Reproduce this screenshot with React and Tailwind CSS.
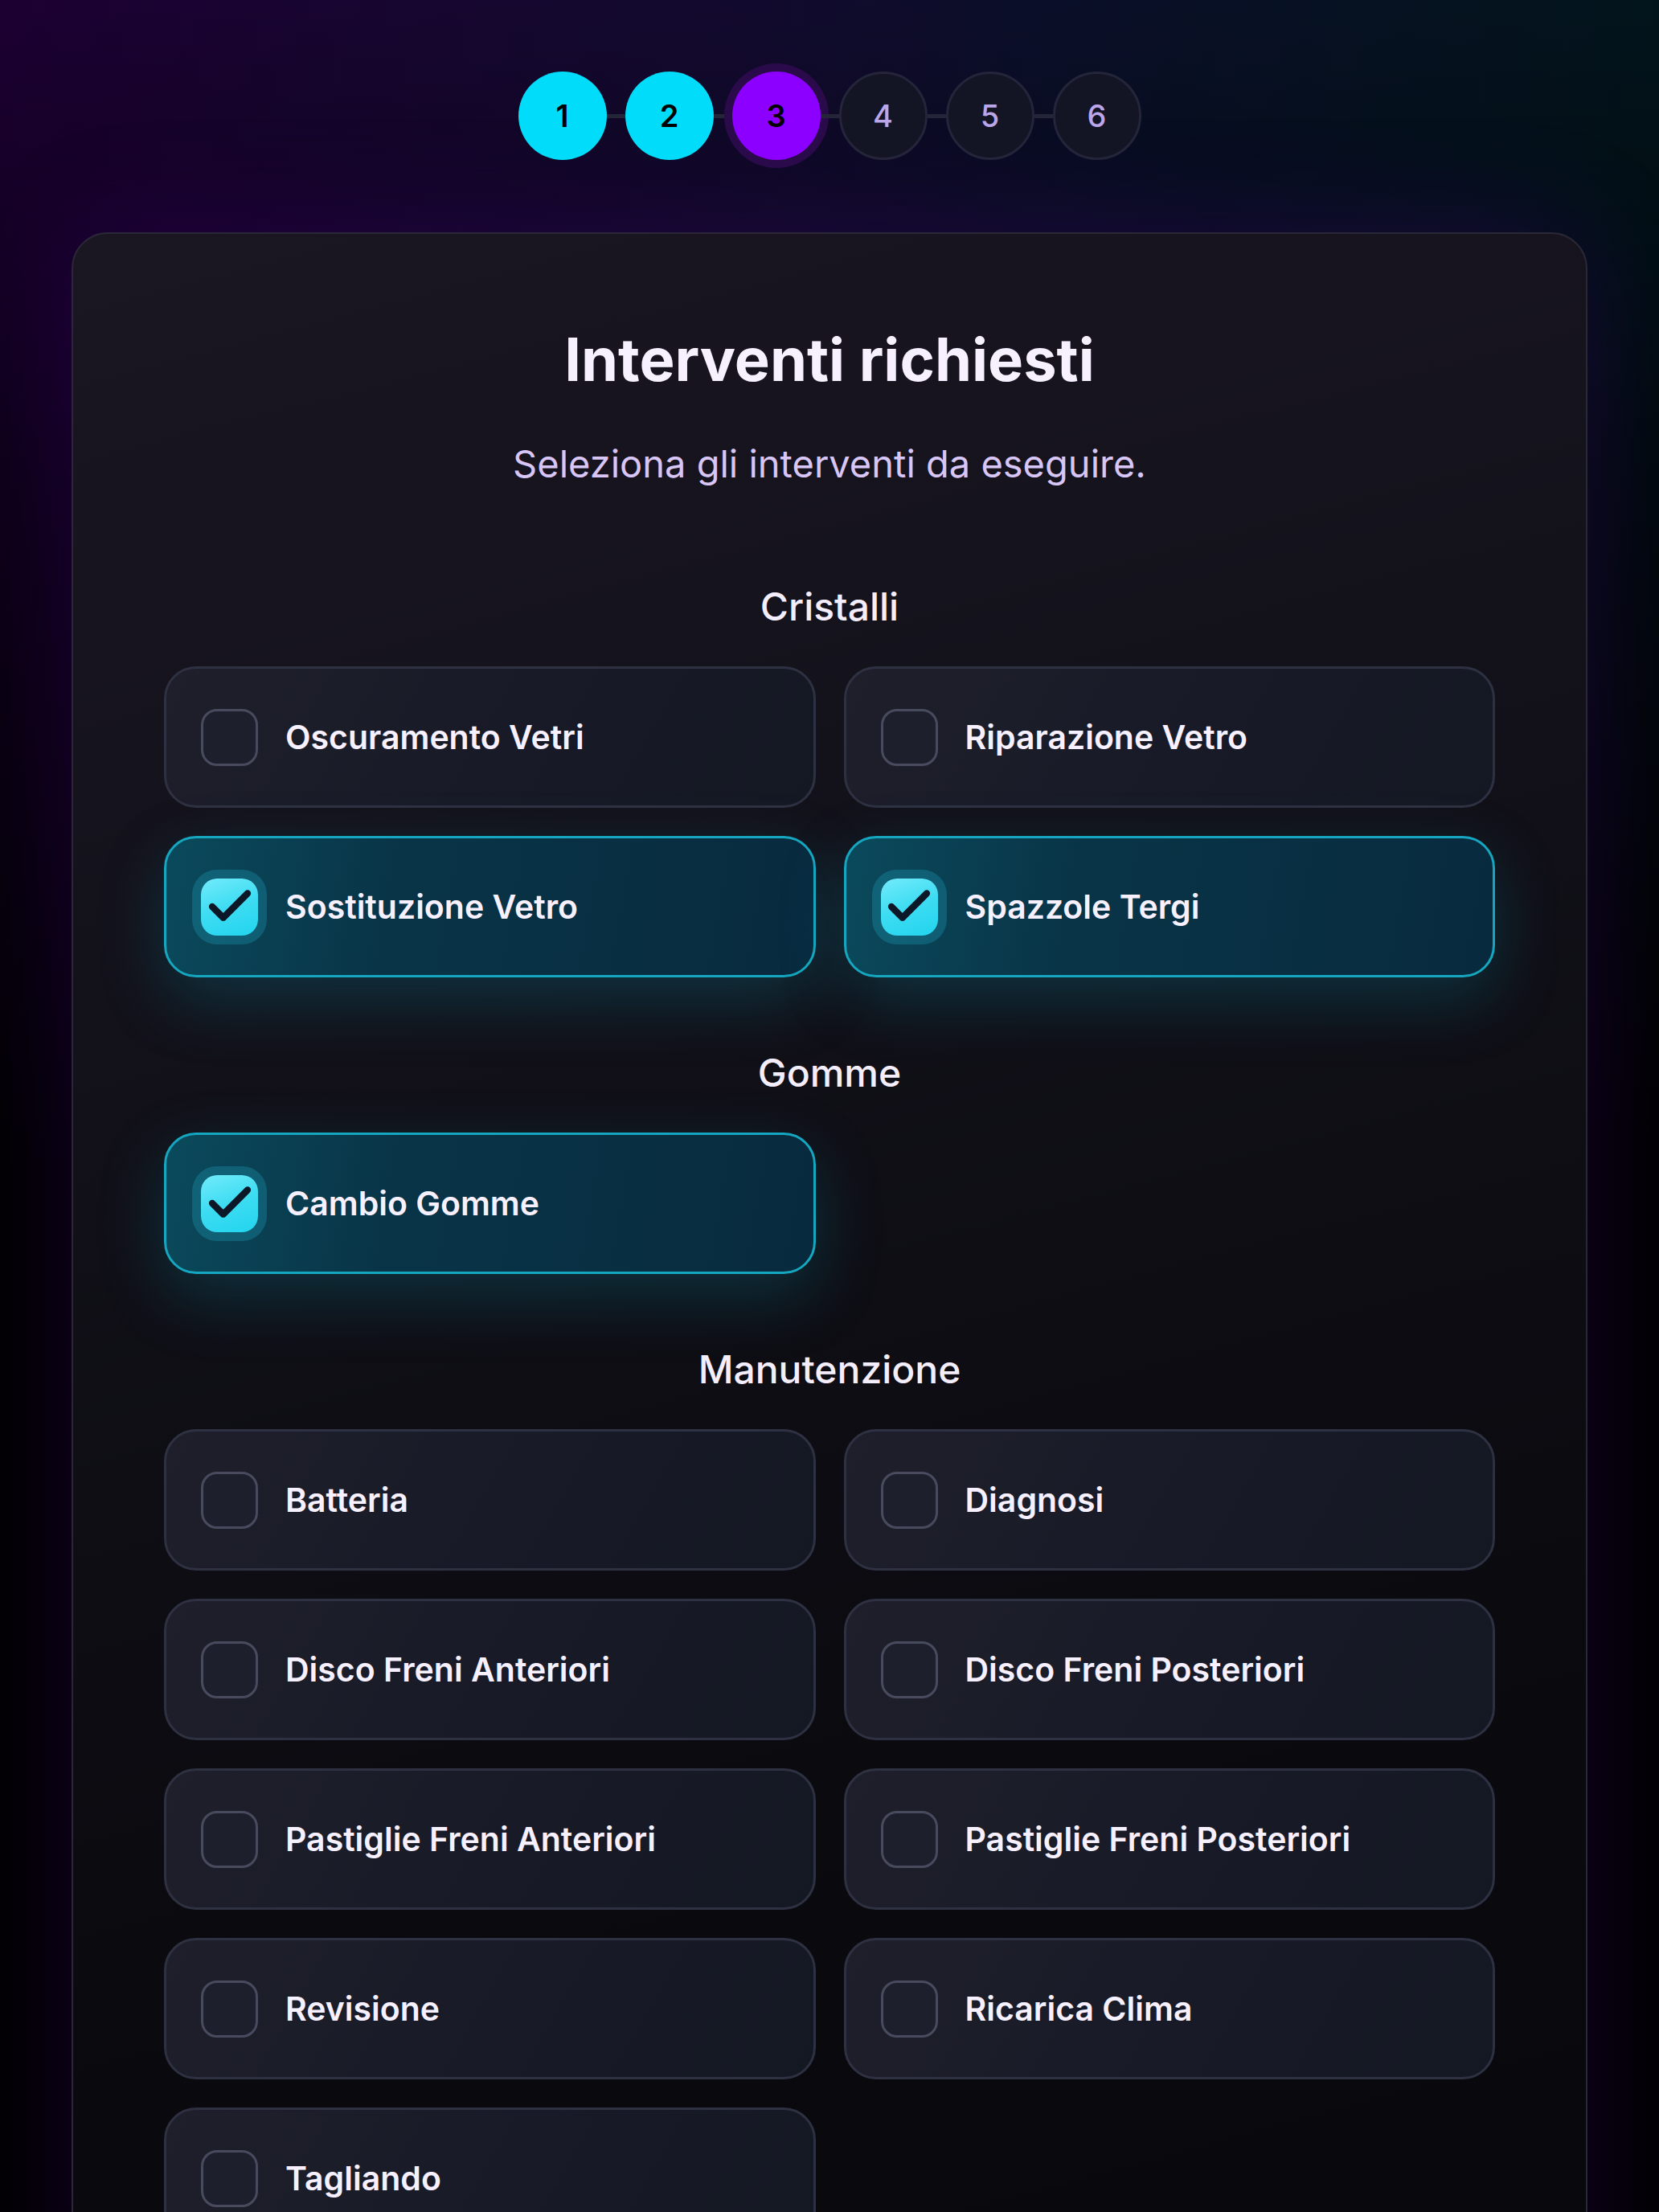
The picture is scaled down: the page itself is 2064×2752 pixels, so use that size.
import React from "react";
import { Check } from "lucide-react";

const steps = [1, 2, 3, 4, 5, 6];

const sections = [
  {
    title: "Cristalli",
    items: [
      { label: "Oscuramento Vetri", checked: false },
      { label: "Riparazione Vetro", checked: false },
      { label: "Sostituzione Vetro", checked: true },
      { label: "Spazzole Tergi", checked: true },
    ],
  },
  {
    title: "Gomme",
    items: [{ label: "Cambio Gomme", checked: true }],
  },
  {
    title: "Manutenzione",
    items: [
      { label: "Batteria", checked: false },
      { label: "Diagnosi", checked: false },
      { label: "Disco Freni Anteriori", checked: false },
      { label: "Disco Freni Posteriori", checked: false },
      { label: "Pastiglie Freni Anteriori", checked: false },
      { label: "Pastiglie Freni Posteriori", checked: false },
      { label: "Revisione", checked: false },
      { label: "Ricarica Clima", checked: false },
      { label: "Tagliando", checked: false },
    ],
  },
];

const StepCircle = ({ n }) => {
  if (n < 3) {
    return (
      <div className="w-[110px] h-[110px] rounded-full bg-[#00dcfa] flex items-center justify-center text-[38px] font-semibold text-black">
        {n}
      </div>
    );
  }
  if (n === 3) {
    return (
      <div className="w-[110px] h-[110px] rounded-full bg-[#8c00ff] flex items-center justify-center text-[38px] font-semibold text-black shadow-[0_0_0_10px_#2b0a4c]">
        {n}
      </div>
    );
  }
  return (
    <div className="w-[110px] h-[110px] rounded-full bg-[#131424] border-[3px] border-[#24253a] flex items-center justify-center text-[38px] font-medium text-[#bba6ea]">
      {n}
    </div>
  );
};

const Option = ({ label, checked }) => {
  return (
    <div
      className={
        checked
          ? "h-[176px] rounded-[40px] border-[3px] border-[#16a7c0] bg-[linear-gradient(100deg,#0a4a5c_0%,#093447_35%,#082a3e_100%)] shadow-[0_28px_80px_rgba(6,150,180,0.25)] flex items-center pl-[43px] gap-[34px]"
          : "h-[176px] rounded-[40px] border-[3px] border-[#2e3141] bg-[linear-gradient(120deg,#1e1f2b_0%,#181b27_50%,#141823_100%)] flex items-center pl-[43px] gap-[34px]"
      }
    >
      {checked ? (
        <div className="w-[71px] h-[71px] rounded-[20px] bg-[linear-gradient(160deg,#72ebfb_0%,#3ddcf2_50%,#22d4ee_100%)] shadow-[0_0_0_11px_rgba(40,200,230,0.22)] flex items-center justify-center shrink-0">
          <Check size={66} strokeWidth={3} color="#0c1828" />
        </div>
      ) : (
        <div className="w-[71px] h-[71px] rounded-[20px] border-[3px] border-[#474b5d] bg-[#1d1f2d] shrink-0" />
      )}
      <span className="text-[41px] font-semibold text-[#f6f0ff] leading-none">
        {label}
      </span>
    </div>
  );
};

const App = () => {
  return (
    <div
      className="min-h-[2752px] overflow-hidden bg-black bg-[linear-gradient(180deg,rgba(0,0,0,0)_0px,rgba(0,0,0,0.55)_600px,#000_1500px),linear-gradient(90deg,#1c0032_0%,#120a2e_45%,#0a0f28_65%,#02141b_100%)] pt-[89px] pb-[120px]"
      style={{ fontFamily: "Inter, 'Noto Sans', sans-serif" }}
    >
      <div className="flex items-center justify-center">
        {steps.map((n, i) => (
          <React.Fragment key={n}>
            {i > 0 && <div className="w-[23px] h-[5px] bg-[#25253a]" />}
            <StepCircle n={n} />
          </React.Fragment>
        ))}
      </div>

      <div className="mx-[89px] mt-[90px] rounded-[45px] border-2 border-[#2a2736] bg-[linear-gradient(165deg,#1a1622_0%,#121119_35%,#0a0a0f_70%,#08080c_100%)] shadow-[0_0_140px_rgba(100,0,190,0.22)] pt-[119px] px-[113px] pb-[115px]">
        <h1 className="text-[74px] font-bold leading-none text-center text-[#f6f0ff]">
          Interventi richiesti
        </h1>
        <p className="mt-[69px] text-[47px] leading-none text-center text-[#d8c6f6]">
          Seleziona gli interventi da eseguire.
        </p>

        <div className="mt-[131px] flex flex-col gap-[95px]">
          {sections.map((s) => (
            <div key={s.title}>
              <h2 className="text-[48px] font-medium leading-none text-center text-[#f4eefc] mb-[50px]">
                {s.title}
              </h2>
              <div className="grid grid-cols-2 gap-[35px]">
                {s.items.map((it) => (
                  <Option key={it.label} label={it.label} checked={it.checked} />
                ))}
              </div>
            </div>
          ))}
        </div>
      </div>
    </div>
  );
};

export default App;
